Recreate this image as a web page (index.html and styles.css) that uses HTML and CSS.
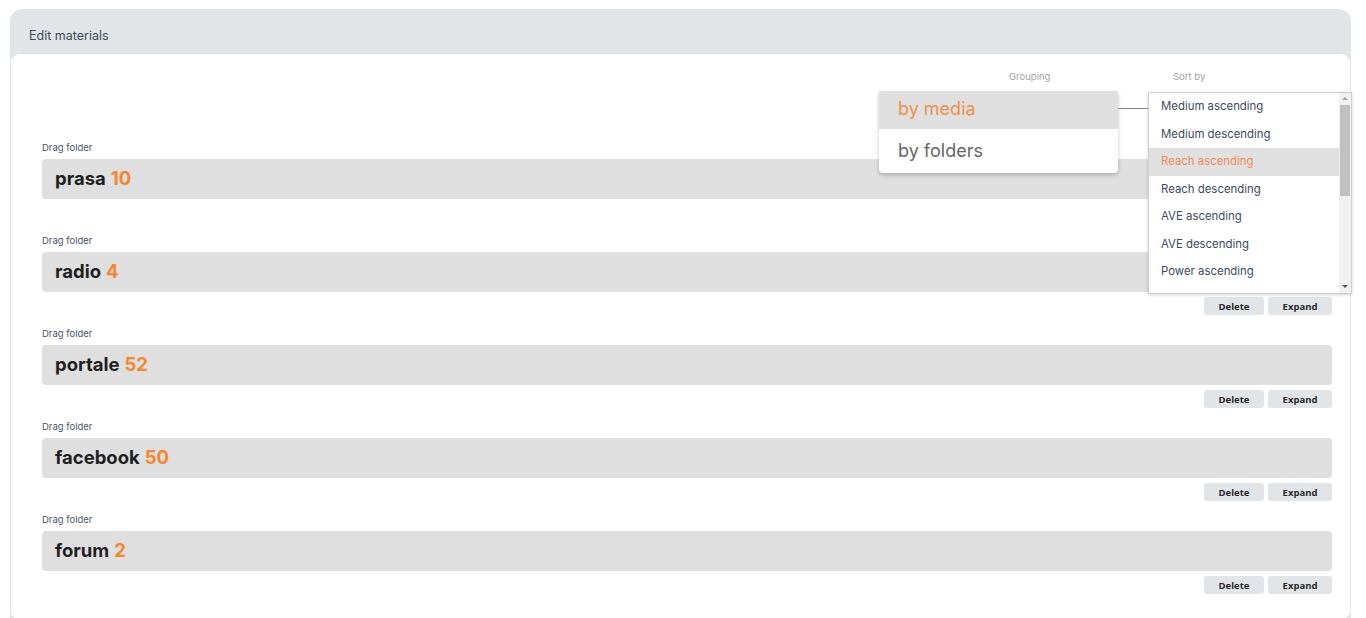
FILE: index.html
```html
<!DOCTYPE html>
<html>
<head>
<meta charset="utf-8">
<link rel="stylesheet" href="styles.css">
</head>
<body>
<div class="page">
  <div class="card">
    <div class="card-head">Edit materials</div>
    <div class="card-body">
      <div class="controls">
        <div class="ctrl ctrl-group">
          <div class="ctrl-label">Grouping</div>
          <div class="menu group-menu">
            <div class="menu-item active">by media</div>
            <div class="menu-item">by folders</div>
          </div>
          <div class="select-line"></div>
        </div>
        <div class="ctrl ctrl-sort">
          <div class="ctrl-label">Sort by</div>
          <div class="listbox">
            <div class="list-items">
              <div class="list-item">Medium ascending</div>
              <div class="list-item">Medium descending</div>
              <div class="list-item selected">Reach ascending</div>
              <div class="list-item">Reach descending</div>
              <div class="list-item">AVE ascending</div>
              <div class="list-item">AVE descending</div>
              <div class="list-item">Power ascending</div>
              <div class="list-item">Power descending</div>
            </div>
            <div class="scrollbar">
              <div class="arrow up"></div>
              <div class="track"><div class="thumb"></div></div>
              <div class="arrow down"></div>
            </div>
          </div>
        </div>
      </div>

      <div class="folder">
        <div class="folder-label">Drag folder</div>
        <div class="folder-bar"><span class="name">prasa</span> <span class="count">10</span></div>
        <div class="folder-actions"><button class="btn">Delete</button><button class="btn">Expand</button></div>
      </div>
      <div class="folder">
        <div class="folder-label">Drag folder</div>
        <div class="folder-bar"><span class="name">radio</span> <span class="count">4</span></div>
        <div class="folder-actions"><button class="btn">Delete</button><button class="btn">Expand</button></div>
      </div>
      <div class="folder">
        <div class="folder-label">Drag folder</div>
        <div class="folder-bar"><span class="name">portale</span> <span class="count">52</span></div>
        <div class="folder-actions"><button class="btn">Delete</button><button class="btn">Expand</button></div>
      </div>
      <div class="folder">
        <div class="folder-label">Drag folder</div>
        <div class="folder-bar"><span class="name">facebook</span> <span class="count">50</span></div>
        <div class="folder-actions"><button class="btn">Delete</button><button class="btn">Expand</button></div>
      </div>
      <div class="folder">
        <div class="folder-label">Drag folder</div>
        <div class="folder-bar"><span class="name">forum</span> <span class="count">2</span></div>
        <div class="folder-actions"><button class="btn">Delete</button><button class="btn">Expand</button></div>
      </div>
    </div>
  </div>
</div>
</body>
</html>
```

FILE: styles.css
```css
* { box-sizing: border-box; }
html, body { margin: 0; padding: 0; background: #fff; }
body {
  font-family: "Inter", "Noto Sans", sans-serif;
  color: #3d4a5c;
  overflow: hidden;
}
.page {
  padding: 9px 15px 0 10px;
}
.card {
  background: #e2e5e8;
  border-radius: 12px 12px 0 0;
  padding: 0 1px 1px 1px;
}
.card-head {
  height: 45px;
  padding: 20px 0 0 18px;
  font-size: 12.5px;
  line-height: 14px;
  color: #3f4a5a;
}
.card-body {
  background: #fff;
  border-radius: 9px 9px 8px 8px;
  padding: 0 18px 12px 31px;
  min-height: 564px;
}
.controls {
  height: 88px;
  display: flex;
  justify-content: flex-end;
  align-items: flex-start;
  gap: 30px;
  margin-right: -19px;
  padding-top: 17px;
  position: relative;
  z-index: 5;
}
.ctrl { position: relative; }
.ctrl-group { width: 239px; }
.ctrl-sort { width: 203px; }
.ctrl-label {
  font-size: 9.5px;
  line-height: 12px;
  color: #a3a3a3;
}
.ctrl-group .ctrl-label { padding-left: 130px; }
.ctrl-sort .ctrl-label { padding-left: 25px; }

.menu {
  position: absolute;
  top: 20px;
  left: 0;
  width: 239px;
  background: #fff;
  box-shadow: 0 2px 4px rgba(0,0,0,0.22);
  border-radius: 0 0 4px 4px;
}
.menu-item {
  height: 44px;
  padding-left: 19px;
  font-size: 18px;
  line-height: 44px;
  color: #666;
}
.menu-item.active {
  background: #dfdfdf;
  color: #f0904a;
  height: 38px;
  line-height: 36px;
}
.select-line {
  position: absolute;
  top: 37px;
  left: 239px;
  width: 30px;
  height: 1px;
  background: #8a8a8a;
}

.listbox {
  position: absolute;
  top: 21px;
  left: 0;
  width: 204px;
  height: 202px;
  background: #fff;
  border: 1px solid #cfcfcf;
  box-shadow: 0 1px 3px rgba(0,0,0,0.18);
  display: flex;
  overflow: hidden;
}
.list-items {
  flex: 1;
  overflow: hidden;
}
.list-item {
  height: 27.5px;
  line-height: 27.5px;
  padding-left: 12px;
  font-size: 11.4px;
  color: #3d4a5c;
  white-space: nowrap;
}
.list-item.selected {
  background: #e0e0e0;
  color: #f08a55;
}
.scrollbar {
  width: 12px;
  background: #f1f1f1;
  display: flex;
  flex-direction: column;
}
.arrow {
  height: 12px;
  position: relative;
}
.arrow::after {
  content: "";
  position: absolute;
  left: 3px;
  top: 4px;
  border-left: 3px solid transparent;
  border-right: 3px solid transparent;
}
.arrow.up::after { border-bottom: 3px solid #a3a3a3; }
.arrow.down::after { border-top: 3px solid #505050; }
.track { flex: 1; padding: 0 1px; }
.thumb {
  height: 91px;
  background: #c1c1c1;
}

.folder { margin-bottom: 13px; }
.folder-label {
  font-size: 9.5px;
  line-height: 12px;
  color: #4a5566;
  margin-bottom: 5px;
}
.folder-bar {
  height: 40px;
  background: #dfdfdf;
  border-radius: 4px;
  padding-left: 13px;
  display: flex;
  align-items: center;
  gap: 5px;
  font-size: 18.5px;
  font-weight: 700;
  padding-bottom: 2px;
}
.folder-bar .name { color: #1f1f1f; }
.folder-bar .count { color: #f5862e; }
.folder-actions {
  display: flex;
  justify-content: flex-end;
  gap: 4px;
  margin-top: 5px;
}
.btn {
  border: none;
  background: #e2e5e8;
  border-radius: 3px;
  height: 18px;
  font-family: "Open Sans", "Noto Sans", sans-serif;
  font-size: 9.5px;
  font-weight: 700;
  color: #2a2a2a;
  padding: 0;
  cursor: pointer;
}
.btn:first-child { width: 60px; }
.btn:last-child { width: 64px; }
```
